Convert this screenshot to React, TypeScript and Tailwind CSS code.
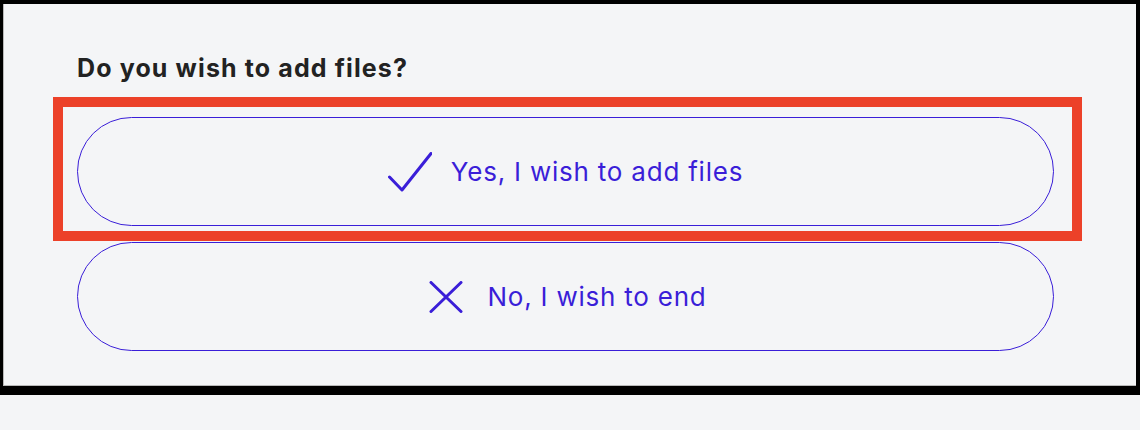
import React from "react";

function CheckIcon() {
  return (
    <svg width="44" height="40" viewBox="0 0 44 40" fill="none" className="shrink-0">
      <path
        d="M1.5 25 L14 38 L43 1.5"
        stroke="currentColor"
        strokeWidth="3"
        strokeLinecap="round"
        strokeLinejoin="round"
      />
    </svg>
  );
}

function CrossIcon() {
  return (
    <svg width="44" height="32" viewBox="0 0 44 32" fill="none" className="shrink-0">
      <path
        d="M7 1.5 L37 30.5 M37 1.5 L7 30.5"
        stroke="currentColor"
        strokeWidth="3"
        strokeLinecap="round"
      />
    </svg>
  );
}

function ChoiceButton({ icon, label }: { icon: React.ReactNode; label: string }) {
  return (
    <button
      type="button"
      className="flex h-[109px] w-full items-center justify-center gap-[19px] rounded-full border border-[#3a1ed8] bg-transparent text-[#3a1ed8]"
    >
      {icon}
      <span className="text-[26px] leading-8 tracking-[0.03em]">{label}</span>
    </button>
  );
}

export default function App() {
  return (
    <div
      className="min-h-[430px] w-full bg-[#f4f5f7]"
      style={{ fontFamily: "Inter, 'Noto Sans', sans-serif" }}
    >
      <div className="border-t-4 border-r-4 border-b-[9px] border-l-[3px] border-black">
        <div className="relative border-b border-l border-[#b9b9b9] pt-[48px] pr-[82px] pb-[34px] pl-[73px]">
          <h2 className="text-[25px] leading-8 font-bold tracking-[0.045em] text-[#222222]">
            Do you wish to add files?
          </h2>

          <div className="mt-[33px] flex flex-col gap-4">
            <ChoiceButton icon={<CheckIcon />} label="Yes, I wish to add files" />
            <ChoiceButton icon={<CrossIcon />} label="No, I wish to end" />
          </div>

          {/* highlight annotation */}
          <div className="pointer-events-none absolute top-[93px] left-[49px] h-[144px] w-[1029px] border-[10px] border-[#ec4129]" />
        </div>
      </div>
    </div>
  );
}
